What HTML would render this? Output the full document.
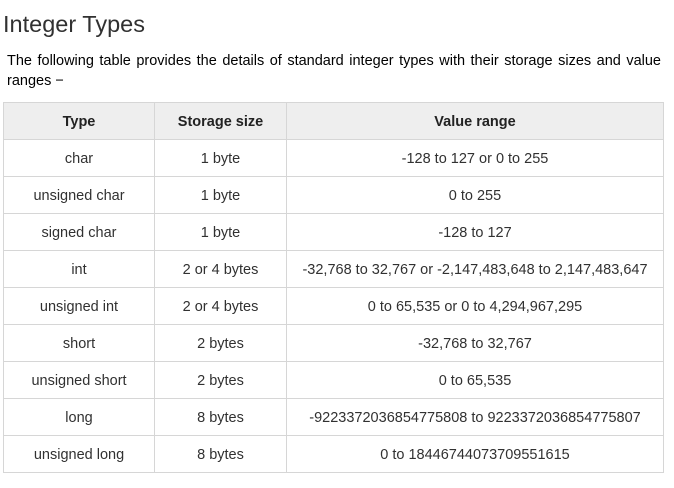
<!DOCTYPE html>
<html><head><style>
body{margin:0;background:#fff;font-family:"Liberation Sans",sans-serif;color:#313131;width:674px;height:488px;overflow:hidden}
h2{position:absolute;left:3px;top:9px;margin:0;font-weight:normal;font-size:23.5px;line-height:30px;color:#313131}
p{position:absolute;left:7px;top:51px;width:654px;margin:0;font-size:14.5px;line-height:20px;text-align:justify;color:#000}
table{position:absolute;left:3px;top:102px;border-collapse:collapse;width:661px;font-size:14.5px}
td,th{border:1px solid #d6d6d6;text-align:center;height:35px;padding:1px 0 0 0}
th{background:#eee;font-weight:bold;color:#222}
</style></head><body>
<h2>Integer Types</h2>
<p>The following table provides the details of standard integer types with their storage sizes and value ranges −</p>
<table>
<tr><th style="width:150px">Type</th><th style="width:131px">Storage size</th><th>Value range</th></tr>
<tr><td>char</td><td>1 byte</td><td>-128 to 127 or 0 to 255</td></tr>
<tr><td>unsigned char</td><td>1 byte</td><td>0 to 255</td></tr>
<tr><td>signed char</td><td>1 byte</td><td>-128 to 127</td></tr>
<tr><td>int</td><td>2 or 4 bytes</td><td>-32,768 to 32,767 or -2,147,483,648 to 2,147,483,647</td></tr>
<tr><td>unsigned int</td><td>2 or 4 bytes</td><td>0 to 65,535 or 0 to 4,294,967,295</td></tr>
<tr><td>short</td><td>2 bytes</td><td>-32,768 to 32,767</td></tr>
<tr><td>unsigned short</td><td>2 bytes</td><td>0 to 65,535</td></tr>
<tr><td>long</td><td>8 bytes</td><td>-9223372036854775808 to 9223372036854775807</td></tr>
<tr><td>unsigned long</td><td>8 bytes</td><td>0 to 18446744073709551615</td></tr>
</table>
</body></html>
